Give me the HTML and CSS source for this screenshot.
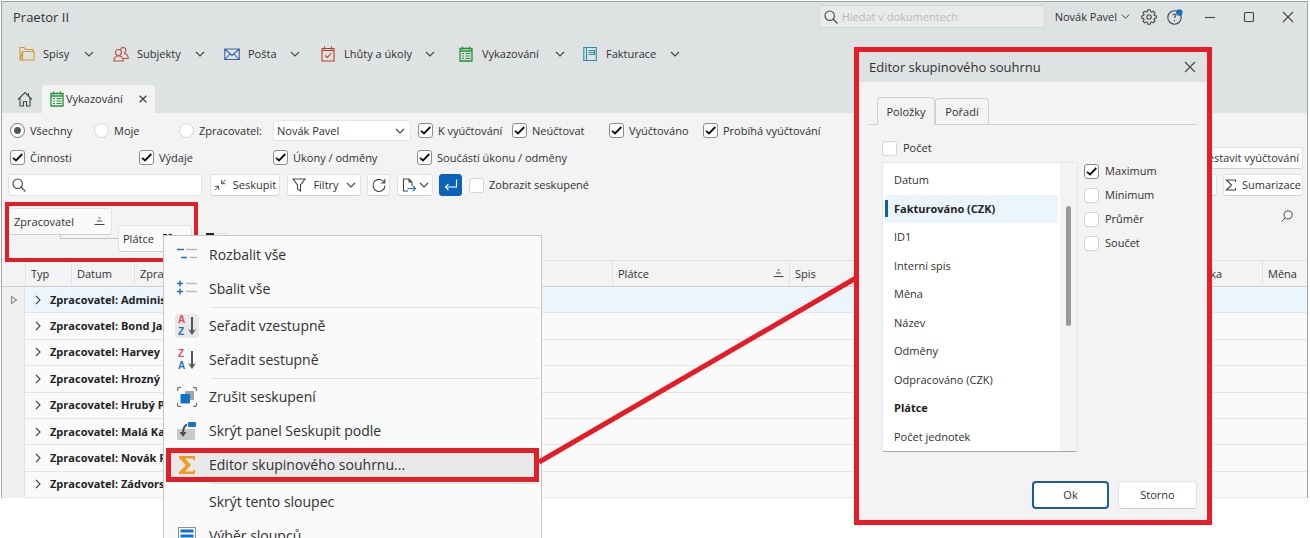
FILE: index.html
```html
<!DOCTYPE html>
<html lang="cs">
<head>
<meta charset="utf-8">
<title>Praetor II</title>
<link rel="stylesheet" href="styles.css">
</head>
<body>
<svg class="defs" width="0" height="0" aria-hidden="true">
  <symbol id="chev" viewBox="0 0 10 10"><path d="M1 3l4 4 4-4"/></symbol>
  <symbol id="cross" viewBox="0 0 12 12"><path d="M1 1l10 10M11 1L1 11"/></symbol>
  <symbol id="lens" viewBox="0 0 14 14"><circle cx="5.700" cy="5.700" r="4.700"/><path d="M9 9l4.500 4.500"/></symbol>
  <symbol id="sheet" viewBox="0 0 14 16"><path d="M1 2.500h12v12.500H1zM1 5h12" stroke-width="1.300"/><path d="M3.500.5v3M7 1.500v1.500M10.500.5v3M3 7.500h2M6.500 7.500h5M3 10h2M6.500 10h5M3 12.500h2M6.500 12.500h5" stroke-width="1.200"/></symbol>
  <symbol id="sort" viewBox="0 0 11 9"><path d="M4.500 1h2M3 4h5M.5 7.500h10"/></symbol>
  <symbol id="arrow" viewBox="0 0 8 20"><path d="M4 1v15" stroke-width="2" stroke="#505558"/><path d="M0 13l4 6 4-6-4 2z" fill="#505558" stroke="none"/></symbol>
</svg>

<main class="window">
  <header class="head">
    <div class="titlebar">
      <h1 class="title">Praetor II</h1>
      <label class="docsearch"><svg class="ico i14"><use href="#lens"/></svg><input type="search" placeholder="Hledat v dokumentech" aria-label="Hledat v dokumentech"></label>
      <button class="bare user">Novák Pavel <svg class="ico i9"><use href="#chev"/></svg></button>
      <button class="bare gear" aria-label="Nastavení"><svg class="ico i16" viewBox="0 0 16 16"><circle cx="8" cy="8" r="2.200"/><path d="M6.800.8h2.400l.4 1.900 1.100.5 1.700-1.100 1.600 1.600-1.100 1.700.5 1.100 1.900.4v2.200l-1.900.4-.5 1.100 1.100 1.700-1.600 1.600-1.700-1.100-1.100.5-.4 1.900H6.800l-.4-1.900-1.100-.5-1.700 1.100L2 12.300l1.100-1.700-.5-1.100-1.900-.4V6.900l1.900-.4.5-1.100L2 3.700l1.600-1.600 1.700 1.100 1.100-.5z"/></svg></button>
      <button class="bare help" aria-label="Nápověda"><svg class="ico i16" viewBox="0 0 16 16"><circle cx="7.500" cy="8.500" r="6.700"/><path d="M5.800 6.300c.3-1.800 3.200-1.600 3 .2-.1 1-1.300 1.200-1.300 2.500M7.500 11v1.200"/><circle cx="12.300" cy="3.500" r="3.200" fill="#1171c4" stroke="none"/></svg></button>
      <div class="winctl">
        <button class="bare" aria-label="Minimalizovat"><svg class="ico i12" viewBox="0 0 12 12"><path d="M1 6.500h10"/></svg></button>
        <button class="bare" aria-label="Maximalizovat"><svg class="ico i12" viewBox="0 0 12 12"><rect x="1.500" y="1.500" width="9" height="9" rx="1"/></svg></button>
        <button class="bare" aria-label="Zavřít"><svg class="ico i12"><use href="#cross"/></svg></button>
      </div>
    </div>
    <nav class="menu">
      <button class="bare spisy"><svg class="ico i16 gold" viewBox="0 0 16 16"><path d="M1 14V1.500h4l1.500 2h7.500V6M1 14l2.500-8.500H15V14zM3.500 5.500V14"/></svg><span>Spisy</span><svg class="ico i10"><use href="#chev"/></svg></button>
      <button class="bare subj"><svg class="ico i16 brick" viewBox="0 0 16 16"><circle cx="5.500" cy="6.500" r="3"/><path d="M.8 15c0-3 1.800-5 4.700-5s4.700 2 4.700 5zM7.500 3.500a2.800 2.800 0 1 1 3.300 3.600M11 7.800c2.700 0 4.200 2 4.200 4.700H10"/></svg><span>Subjekty</span><svg class="ico i10"><use href="#chev"/></svg></button>
      <button class="bare posta"><svg class="ico i16 mail" viewBox="0 0 16 16"><path d="M.8 3h14.500v10.500H.8zM.8 3L8 9.500 15.300 3M1 13.500l5-5.500M15 13.500L10 8"/></svg><span>Pošta</span><svg class="ico i10"><use href="#chev"/></svg></button>
      <button class="bare lhuty"><svg class="ico i16 rust" viewBox="0 0 16 16"><path d="M2 2.500h12v12.500H2zM4.500.5v3M11.500.5v3M2 4.500h12M5.300 9.500l2 2 4-4.500"/></svg><span>Lhůty a úkoly</span><svg class="ico i10"><use href="#chev"/></svg></button>
      <button class="bare vyk"><svg class="ico i16 green"><use href="#sheet"/></svg><span>Vykazování</span><svg class="ico i10"><use href="#chev"/></svg></button>
      <button class="bare fakt"><svg class="ico i16 teal" viewBox="0 0 16 16"><path d="M1.800 1.500h12.500v13H1.800zM4.500 1.500v13M6.500 4.500h6v4h-6M6.500 6.500h6"/></svg><span>Fakturace</span><svg class="ico i10"><use href="#chev"/></svg></button>
    </nav>
    <div class="tabs">
      <button class="bare home" aria-label="Domů"><svg class="ico i16" viewBox="0 0 16 16"><path d="M1 8.500l7-7 7 7M3 7v8h3.500v-4.500h3V15H13V7M11.500 4.500V2"/></svg></button>
      <button class="bare tab"><svg class="ico i16 green"><use href="#sheet"/></svg><span>Vykazování</span><svg class="ico i8 heavy"><use href="#cross"/></svg></button>
    </div>
  </header>

  <section class="filters">
    <div class="frow">
      <label class="opt w84"><input type="radio" name="who" checked>Všechny</label>
      <label class="opt w85"><input type="radio" name="who">Moje</label>
      <label class="opt w94"><input type="radio" name="who">Zpracovatel:</label>
      <select class="select" aria-label="Zpracovatel"><option>Novák Pavel</option></select>
      <label class="opt w94"><input type="checkbox" checked>K vyúčtování</label>
      <label class="opt w97"><input type="checkbox" checked>Neúčtovat</label>
      <label class="opt w94"><input type="checkbox" checked>Vyúčtováno</label>
      <label class="opt"><input type="checkbox" checked>Probíhá vyúčtování</label>
    </div>
    <div class="frow">
      <label class="opt w129"><input type="checkbox" checked>Činnosti</label>
      <label class="opt w134"><input type="checkbox" checked>Výdaje</label>
      <label class="opt w144"><input type="checkbox" checked>Úkony / odměny</label>
      <label class="opt"><input type="checkbox" checked>Součástí úkonu / odměny</label>
      <button class="btn push">Sestavit vyúčtování</button>
    </div>
    <div class="frow tools">
      <label class="find"><svg class="ico i14"><use href="#lens"/></svg><input type="search" aria-label="Hledat"></label>
      <button class="btn wgroup"><svg class="ico i12" viewBox="0 0 14 14"><path d="M1 8.500h4.500V13M5.500 8.500L1 13M13 5.500H9V1M9 5.500L13.500 1"/></svg>Seskupit</button>
      <button class="btn wfilter"><svg class="ico i14" viewBox="0 0 14 14"><path d="M1 1h12L8.500 7v6l-3-2V7z"/></svg>Filtry<svg class="ico i10"><use href="#chev"/></svg></button>
      <button class="btn wsq" aria-label="Obnovit"><svg class="ico i14" viewBox="0 0 14 14"><path d="M12.500 5A6 6 0 1 0 13 7.500M12.800 1v4h-4"/></svg></button>
      <button class="btn wexp" aria-label="Export"><svg class="ico i14" viewBox="0 0 14 14"><path d="M6 13H1.500V1H7l3 3v4M7 1v3h3"/><path d="M5.500 10.500h8M11 8l2.500 2.500L11 13" stroke="#1b74bb"/></svg><svg class="ico i10"><use href="#chev"/></svg></button>
      <button class="btn wsq go" aria-label="Potvrdit"><svg class="ico i14" viewBox="0 0 14 14"><path d="M12.500 1.500V9H1.500M4.500 6l-3 3 3 3"/></svg></button>
      <label class="opt"><input type="checkbox">Zobrazit seskupené</label>
      <button class="btn push more" aria-label="Další"><svg class="ico i10"><use href="#chev"/></svg></button>
      <button class="btn wsum"><svg class="ico i12" viewBox="0 0 12 12"><path d="M10.500 3V1H1.500L6.500 6l-5 5h9V9"/></svg>Sumarizace</button>
    </div>
  </section>

  <section class="grouping">
    <div class="groupbox">
      <button class="chip">Zpracovatel<svg class="ico sort"><use href="#sort"/></svg></button>
      <svg class="link" viewBox="0 0 58 26"><path d="M.5 0v3.500H58"/></svg>
      <button class="chip second">Plátce<svg class="ico sort" viewBox="0 0 11 9"><path d="M0 .5h4M2.500 1v3M5.500 5V1.500C6.500-.5 9 0 9.500 2v3" stroke="#222"/></svg></button>
    </div>
    <svg class="stub" viewBox="0 0 22 4"><path d="M2 2h8" stroke="#222" stroke-width="2"/><path d="M12 1.500h10" stroke="#ddd"/></svg>
    <button class="bare gridfind" aria-label="Najít"><svg class="ico i12"><use href="#lens"/></svg></button>
  </section>

  <table class="grid">
    <colgroup><col class="c-ind"><col class="c-typ"><col class="c-dat"><col class="c-zpr"><col class="c-pla"><col><col class="c-cas"><col class="c-men"></colgroup>
    <thead><tr><th class="noline"></th><th>Typ</th><th>Datum</th><th>Zpracovatel</th><th><span class="thsort">Plátce<svg class="ico sort"><use href="#sort"/></svg></span></th><th>Spis</th><th>Částka</th><th>Měna</th></tr></thead>
    <tbody>
      <tr class="sel"><td class="ind"><svg class="ico i8 soft" viewBox="0 0 8 8"><path d="M1.500.5L6.500 4l-5 3.500z"/></svg></td><td colspan="7"><span class="grp"><svg class="ico i10"><use href="#chev"/></svg>Zpracovatel: Administrátor</span></td></tr>
      <tr><td class="ind"></td><td colspan="7"><span class="grp"><svg class="ico i10"><use href="#chev"/></svg>Zpracovatel: Bond Jan</span></td></tr>
      <tr><td class="ind"></td><td colspan="7"><span class="grp"><svg class="ico i10"><use href="#chev"/></svg>Zpracovatel: Harvey S</span></td></tr>
      <tr><td class="ind"></td><td colspan="7"><span class="grp"><svg class="ico i10"><use href="#chev"/></svg>Zpracovatel: Hrozný K</span></td></tr>
      <tr><td class="ind"></td><td colspan="7"><span class="grp"><svg class="ico i10"><use href="#chev"/></svg>Zpracovatel: Hrubý Pe</span></td></tr>
      <tr><td class="ind"></td><td colspan="7"><span class="grp"><svg class="ico i10"><use href="#chev"/></svg>Zpracovatel: Malá Kat</span></td></tr>
      <tr><td class="ind"></td><td colspan="7"><span class="grp"><svg class="ico i10"><use href="#chev"/></svg>Zpracovatel: Novák Pa</span></td></tr>
      <tr><td class="ind"></td><td colspan="7"><span class="grp"><svg class="ico i10"><use href="#chev"/></svg>Zpracovatel: Zádvorsk</span></td></tr>
    </tbody>
  </table>
</main>

<div class="redframe"></div>

<div class="popup" role="menu">
  <button class="item" role="menuitem"><svg class="mi" viewBox="0 0 20 20"><path d="M0 4.500h7M4 12.500h6" stroke="#2372b5" stroke-width="1.500"/><path d="M9 4.500h11M13 12.500h7" stroke="#b8b8b8" stroke-width="1.500"/></svg>Rozbalit vše</button>
  <button class="item" role="menuitem"><svg class="mi" viewBox="0 0 20 20"><path d="M0 4.500h6M3 1.500v6M0 12.500h6M3 9.500v6" stroke="#2372b5" stroke-width="1.500"/><path d="M9 4.500h11M9 12.500h11" stroke="#b8b8b8" stroke-width="1.500"/></svg>Sbalit vše</button>
  <hr>
  <button class="item" role="menuitem"><span class="az on"><span class="letters"><b class="red">A</b><b class="blue">Z</b></span><svg class="arrow"><use href="#arrow"/></svg></span>Seřadit vzestupně</button>
  <button class="item" role="menuitem"><span class="az"><span class="letters"><b class="red">Z</b><b class="blue">A</b></span><svg class="arrow"><use href="#arrow"/></svg></span>Seřadit sestupně</button>
  <hr>
  <button class="item" role="menuitem"><svg class="mi" viewBox="0 0 20 20"><path d="M.7 4V.7H4M16 .7h3.300V4M19.300 16v3.300H16M4 19.300H.7V16" stroke="#555"/><rect x="8" y="4" width="9" height="9" rx="1" fill="#a0a4a8"/><rect x="3.500" y="7" width="9.500" height="9.500" rx="1" fill="#0f72cc"/></svg>Zrušit seskupení</button>
  <button class="item" role="menuitem"><svg class="mi" viewBox="0 0 20 20"><rect x="0" y="8" width="18" height="11" rx="1" fill="#c9c9c9"/><rect x="11" y="1" width="8" height="5" rx="1" fill="#1a73bf"/><path d="M10 3.500C7 5 6 8 6 12" stroke="#4a4f55" stroke-width="2"/><path d="M2.500 11H9.500L6 16z" fill="#4a4f55"/></svg>Skrýt panel Seskupit podle</button>
  <button class="item marked" role="menuitem"><svg class="mi" viewBox="0 0 20 20"><path d="M2 1h16v5l-2.500-2.500H8l6 6.500-6 6.500h7.500L18 14v5H2v-2l7-7-7-7z" fill="#f19a1f"/></svg>Editor skupinového souhrnu...</button>
  <hr>
  <button class="item" role="menuitem"><span class="mi"></span>Skrýt tento sloupec</button>
  <button class="item" role="menuitem"><svg class="mi" viewBox="0 0 20 20"><rect x="1.500" y="1.500" width="17" height="18" fill="#fff" stroke="#8a9299"/><path d="M3.500 5h13M3.500 10h13M3.500 15h13" stroke="#1171c4" stroke-width="3"/></svg>Výběr sloupců</button>
</div>

<svg class="pointer" viewBox="0 0 320 190"><path d="M1 187L318 3"/></svg>

<section class="dialog" role="dialog" aria-labelledby="dlg-title">
  <header class="dhead"><h2 class="dtitle" id="dlg-title">Editor skupinového souhrnu</h2><button class="bare" aria-label="Zavřít"><svg class="ico i12"><use href="#cross"/></svg></button></header>
  <div class="dbody">
    <div class="dtabs"><button class="dtab active">Položky</button><button class="dtab">Pořadí</button></div>
    <div class="dmain">
      <label class="opt"><input type="checkbox">Počet</label>
      <div class="cols">
        <div class="list">
          <ul class="items">
            <li>Datum</li><li class="current">Fakturováno (CZK)</li><li>ID1</li><li>Interní spis</li><li>Měna</li><li>Název</li><li>Odměny</li><li>Odpracováno (CZK)</li><li class="bold">Plátce</li><li>Počet jednotek</li>
          </ul>
          <div class="track"><div class="thumb"></div></div>
        </div>
        <div class="aggs">
          <label class="opt"><input type="checkbox" checked>Maximum</label>
          <label class="opt"><input type="checkbox">Minimum</label>
          <label class="opt"><input type="checkbox">Průměr</label>
          <label class="opt"><input type="checkbox">Součet</label>
        </div>
      </div>
    </div>
    <footer class="dfoot"><button class="dbtn primary">Ok</button><button class="dbtn">Storno</button></footer>
  </div>
</section>
</body>
</html>
```
FILE: styles.css
```css
* { box-sizing: border-box; }
body {
  margin: 0;
  height: 100vh;
  overflow: hidden;
  position: relative;
  background: #fff;
  color: #303030;
  font: 11px/16px "Open Sans", "Noto Sans", sans-serif;
}
button, input, select { font: inherit; color: inherit; margin: 0; }
button { white-space: nowrap; }
h1, h2, ul { margin: 0; padding: 0; font-weight: 400; list-style: none; }
.defs { position: absolute; }

.ico { fill: none; stroke: #454545; stroke-width: 1.1; flex: none; display: block; overflow: visible; }
.i8 { width: 8px; height: 8px; }
.i9 { width: 9px; height: 9px; }
.i10 { width: 10px; height: 10px; }
.i12 { width: 12px; height: 12px; }
.i14 { width: 14px; height: 14px; }
.i16 { width: 16px; height: 16px; }
.sort { width: 11px; height: 9px; }
.gold { stroke: #cf9a28; }
.brick { stroke: #b5523f; }
.mail { stroke: #3467a8; }
.rust { stroke: #c23a24; }
.green { stroke: #24933a; }
.teal { stroke: #2b8ea1; }
.soft { stroke: #888; }
.heavy { stroke-width: 2; }

.bare { border: 0; padding: 0; background: none; display: flex; align-items: center; }

/* Window */
.window { margin: 1px 2px 0 1px; border: 1px solid #9ba5a5; border-bottom: 0; background: #f3f3f3; }
.head { background: #dfe2e3; }
.titlebar { display: flex; align-items: center; height: 29px; padding: 0 13px 0 11px; }
.title { flex: 1; font-size: 13px; }
.docsearch, .find { display: flex; align-items: center; background: #e9ebeb; border: 1px solid #d3d6d6; border-radius: 3px; }
.docsearch { width: 226px; height: 23px; padding: 0 4px; gap: 4px; margin-right: 10px; }
.docsearch input, .find input { flex: 1; min-width: 0; border: 0; padding: 0; background: none; outline: 0; }
.docsearch input::placeholder { color: #b7baba; opacity: 1; }
.user { gap: 4px; margin-right: 11px; }
.gear { margin-right: 10px; }
.help { margin-right: 21px; }
.winctl { display: flex; gap: 27px; }

.menu { display: flex; height: 45px; padding: 0 17px; align-items: center; }
.menu .bare span { flex: 1; text-align: left; }
.menu .bare { gap: 8px; }
.spisy { width: 75px; margin-right: 19px; }
.subj { width: 92px; margin-right: 19px; }
.posta { width: 76px; margin-right: 20px; }
.lhuty { width: 115px; margin-right: 23px; }
.vyk { width: 107px; margin-right: 17px; }
.fakt { width: 98px; }

.tabs { display: flex; padding: 9px 15px 0; gap: 9px; }
.tab { height: 28px; padding: 0 8px 0 7px; border-radius: 4px 4px 0 0; background: #f3f3f3; }
.tab span { width: 74px; text-align: left; padding-left: 1px; }

/* Filters */
.filters { padding: 4px 4px 0 6px; }
.frow { display: flex; align-items: center; height: 27px; padding-left: 2px; }
.tools { padding-left: 0; height: 28px; }
.opt { display: flex; align-items: center; gap: 5px; white-space: nowrap; }
input[type="checkbox"], input[type="radio"] { appearance: none; flex: none; width: 15px; height: 15px; background: #fff; border: 1px solid #d4d4d4; border-radius: 3px; }
input[type="radio"] { border-radius: 8px; }
input[type="checkbox"]:checked {
  border-color: #8c8c8c;
  background: #fff url("data:image/svg+xml,%3Csvg xmlns='http://www.w3.org/2000/svg' viewBox='0 0 13 13'%3E%3Cpath d='M2 6.800l3 2.700L11.300 3' fill='none' stroke='%23111' stroke-width='1.800'/%3E%3C/svg%3E") center / 13px no-repeat;
}
input[type="radio"]:checked { border-color: #777; background: radial-gradient(circle, #555 3px, #fff 4px); }
.w84 { width: 84px; }
.w85 { width: 85px; }
.w94 { width: 94px; }
.w97 { width: 97px; }
.w129 { width: 129px; }
.w134 { width: 134px; }
.w144 { width: 144px; }
.select {
  width: 138px; height: 21px; margin-right: 7px; padding: 0 3px; appearance: none;
  border: 1px solid #e4e4e4; border-radius: 3px;
  background: #fff url("data:image/svg+xml,%3Csvg xmlns='http://www.w3.org/2000/svg' viewBox='0 0 10 10'%3E%3Cpath d='M1 3l4 4 4-4' fill='none' stroke='%23444' stroke-width='1.200'/%3E%3C/svg%3E") right 5px center / 10px no-repeat;
}
.find { width: 194px; height: 22px; padding: 0 3px; margin-right: 8px; background: #fff; border-color: #e2e2e2; }
.btn { height: 22px; display: flex; align-items: center; justify-content: center; gap: 7px; padding: 0 3px; background: #fff; border: 1px solid #e2e2e2; border-bottom-color: #d0d0d0; border-radius: 3px; }
.push { margin-left: auto; }
.wgroup { width: 70px; margin-right: 7px; }
.wfilter { width: 74px; margin-right: 6px; }
.wsq { width: 23px; margin-right: 7px; padding: 0; }
.wexp { width: 36px; margin-right: 6px; gap: 3px; }
.go { background: #0a63b8; border-color: #0a63b8; }
.go .ico { stroke: #fff; }
.more { width: 24px; margin-right: 6px; }
.wsum { width: 80px; gap: 5px; }

/* Grouping panel */
.grouping { display: flex; height: 61px; padding: 9px 12px 0 6px; align-items: flex-start; }
.groupbox { display: flex; align-items: flex-start; }
.chip { display: flex; align-items: center; justify-content: space-between; width: 104px; height: 27px; padding: 0 6px 0 5px; background: #fafafa; border: 1px solid #e3e3e3; border-bottom-color: #cfcfcf; border-radius: 3px; }
.second { width: 74px; margin-top: 17px; padding: 0 17px 0 4px; }
.link { width: 58px; height: 26px; margin: 27px 0 0 -52px; fill: none; stroke: #c4c4c4; }
.stub { width: 22px; height: 4px; margin: 24px 0 0 12px; }
.gridfind { margin: 2px 2px 0 auto; transform: scaleX(-1); }

/* Grid */
.grid { width: 100%; height: 238px; table-layout: fixed; border-collapse: separate; border-spacing: 0; }
.c-ind { width: 23px; }
.c-typ { width: 46px; }
.c-dat { width: 63px; }
.c-zpr { width: 478px; }
.c-pla { width: 177px; }
.c-cas { width: 80px; }
.c-men { width: 45px; }
.grid th { height: 27px; padding: 0 5px; font-weight: 400; text-align: left; white-space: nowrap; border: solid #e2e2e2; border-width: 1px 0 1px 1px; border-bottom-color: #cfcfcf; background: #f3f3f3; }
.grid th.noline { border-left: 0; }
.thsort { display: flex; align-items: center; justify-content: space-between; }
.grid td { padding: 0; background: #fafafa; border-bottom: 1px solid #e6e6e6; }
.grid td.ind { background: #efefef; border-bottom: 0; border-right: 1px solid #e2e2e2; padding-left: 8px; }
.grid .sel td:last-child { background: #ebf5fd; }
.grp { display: flex; align-items: center; gap: 7px; padding-left: 8px; font-weight: 700; color: #222; }
.grp .ico { transform: rotate(-90deg); }

/* Context menu */
.popup { position: absolute; left: 163px; top: 235px; width: 379px; padding: 2px 2px; background: #fafafa; border: 1px solid #c4c6c8; font-size: 14px; }
.item { display: flex; align-items: center; gap: 12px; width: 100%; height: 34px; padding: 0 11px; border: 0; background: none; text-align: left; }
.popup hr { height: 1px; margin: 1px 0 1px 45px; border: 0; background: #dedede; }
.mi { width: 20px; height: 20px; flex: none; fill: none; }
.marked { padding: 0 6px; background: #e9e9e9; border: 5px solid #e01f27; }
.az { display: flex; justify-content: center; align-items: center; gap: 3px; width: 24px; height: 24px; margin: 0 -2px; border-radius: 3px; }
.on { background: #e8e8e8; }
.letters { display: flex; flex-direction: column; font: 700 10px/12px "Liberation Sans", sans-serif; }
.red { color: #d64f5a; }
.blue { color: #1c6fb8; }
.arrow { width: 8px; height: 20px; fill: none; }

/* Callouts */
.redframe { position: absolute; left: 5px; top: 202px; width: 193px; height: 60px; border: 4px solid #e01f27; }
.pointer { position: absolute; left: 538px; top: 275px; width: 320px; height: 190px; fill: none; stroke: #e51c25; stroke-width: 5; }

/* Dialog */
.dialog { position: absolute; left: 854px; top: 47px; width: 358px; background: #f3f3f3; border: 5px solid #e81c26; }
.dhead { display: flex; align-items: center; justify-content: space-between; height: 30px; padding: 0 11px 0 10px; background: #dfe2e3; }
.dtitle { font-size: 13px; }
.dbody { padding: 15px 10px 11px; }
.dtabs { display: flex; align-items: flex-end; height: 28px; padding-left: 8px; border-bottom: 1px solid #cfcfcf; }
.dtab { width: 54px; height: 26px; padding: 0; background: #f3f3f3; border: 1px solid #d0d0d0; border-bottom: 0; border-radius: 4px 4px 0 0; }
.dtab.active { width: 58px; height: 28px; margin-bottom: -1px; }
.dmain { display: flex; flex-direction: column; gap: 6px; padding: 15px 0 0 13px; }
.dmain .opt { gap: 6px; }
.cols { display: flex; gap: 6px; }
.list { display: flex; width: 196px; background: #fff; border: 1px solid #e6e6e6; border-bottom-color: #a5a5a5; border-radius: 3px; }
.items { flex: 1; display: grid; grid-auto-rows: 1fr; height: 288px; padding: 3px 2px 0; }
.items li { display: flex; align-items: center; padding-left: 9px; border-radius: 3px; }
.items .current { font-weight: 700; color: #222; background: linear-gradient(#0d5fa8, #0d5fa8) 0 center / 3px 17px no-repeat #ebf5fd; }
.items .bold { font-weight: 700; color: #222; }
.track { width: 17px; padding: 43px 6px 0; background: #f3f3f3; }
.thumb { width: 5px; height: 120px; border-radius: 3px; background: #999; }
.aggs { display: flex; flex-direction: column; gap: 8px; padding-top: 1px; }
.dfoot { display: flex; justify-content: flex-end; gap: 9px; padding-top: 29px; }
.dbtn { width: 79px; height: 28px; padding: 0; background: #fff; border: 1px solid #e2e2e2; border-bottom-color: #cfcfcf; border-radius: 4px; }
.primary { border: 2px solid #1a5c9b; width: 77px; }
```
